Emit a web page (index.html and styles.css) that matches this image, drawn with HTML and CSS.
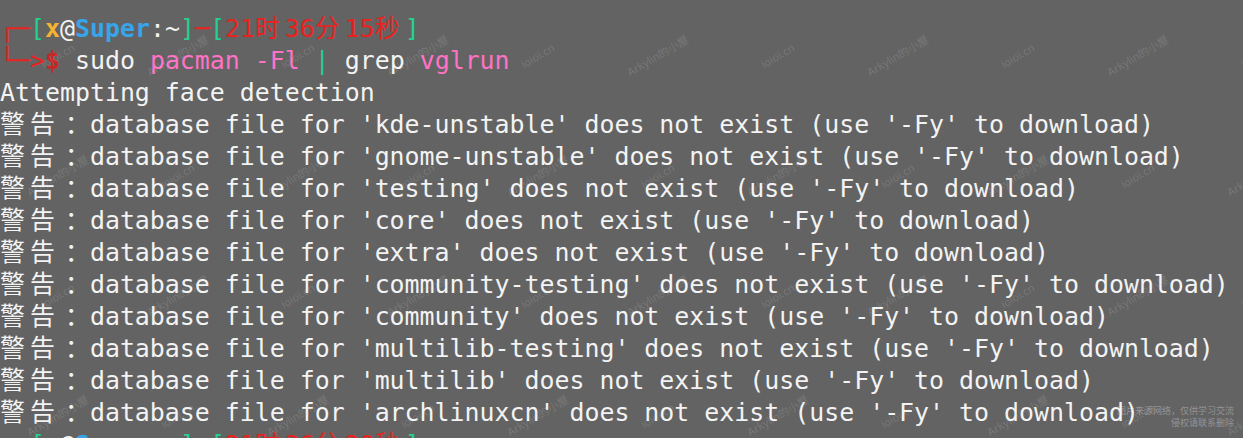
FILE: index.html
```html
<!DOCTYPE html>
<html lang="zh-CN">
<head>
<meta charset="utf-8">
<title>terminal</title>
<link rel="stylesheet" href="styles.css">
</head>
<body>
<div class="term">
<div class="line"><span class="r">┌─</span><span class="g">[</span><span class="y b">x</span><span>@</span><span class="bl b">Super</span><span>:~</span><span class="g">]</span><span class="r">─</span><span class="g">[</span><span class="r">21<span class="w">时</span>36<span class="w">分</span>15<span class="w">秒</span></span><span class="g">]</span></div>
<div class="line"><span class="r">└─&gt;</span><span class="dr b">$</span> sudo <span class="p">pacman -Fl</span> <span class="g">|</span> grep <span class="p">vglrun</span></div>
<div class="line">Attempting face detection</div>
<div class="line"><span class="w">警</span><span class="w">告</span><span class="w colon">：</span>database file for 'kde-unstable' does not exist (use '-Fy' to download)</div>
<div class="line"><span class="w">警</span><span class="w">告</span><span class="w colon">：</span>database file for 'gnome-unstable' does not exist (use '-Fy' to download)</div>
<div class="line"><span class="w">警</span><span class="w">告</span><span class="w colon">：</span>database file for 'testing' does not exist (use '-Fy' to download)</div>
<div class="line"><span class="w">警</span><span class="w">告</span><span class="w colon">：</span>database file for 'core' does not exist (use '-Fy' to download)</div>
<div class="line"><span class="w">警</span><span class="w">告</span><span class="w colon">：</span>database file for 'extra' does not exist (use '-Fy' to download)</div>
<div class="line"><span class="w">警</span><span class="w">告</span><span class="w colon">：</span>database file for 'community-testing' does not exist (use '-Fy' to download)</div>
<div class="line"><span class="w">警</span><span class="w">告</span><span class="w colon">：</span>database file for 'community' does not exist (use '-Fy' to download)</div>
<div class="line"><span class="w">警</span><span class="w">告</span><span class="w colon">：</span>database file for 'multilib-testing' does not exist (use '-Fy' to download)</div>
<div class="line"><span class="w">警</span><span class="w">告</span><span class="w colon">：</span>database file for 'multilib' does not exist (use '-Fy' to download)</div>
<div class="line"><span class="w">警</span><span class="w">告</span><span class="w colon">：</span>database file for 'archlinuxcn' does not exist (use '-Fy' to download)</div>
<div class="line"><span class="r">┌─</span><span class="g">[</span><span class="y b">x</span><span>@</span><span class="bl b">Super</span><span>:~</span><span class="g">]</span><span class="r">─</span><span class="g">[</span><span class="r">21<span class="w">时</span>36<span class="w">分</span>20<span class="w">秒</span></span><span class="g">]</span></div>
</div>

<div class="wm">
<span class="c"><i>ioioi.cn</i></span><span class="c"><i>Arkylin的小屋</i></span><span class="c"><i>ioioi.cn</i></span><span class="c"><i>Arkylin的小屋</i></span><span class="c"><i>ioioi.cn</i></span><span class="c"><i>Arkylin的小屋</i></span><span class="c"><i>ioioi.cn</i></span><span class="c"><i>Arkylin的小屋</i></span><span class="c"><i>ioioi.cn</i></span><span class="c"><i>Arkylin的小屋</i></span><span class="c"><i>ioioi.cn</i></span>
<span class="c"><i>Arkylin的小屋</i></span><span class="c"><i>ioioi.cn</i></span><span class="c"><i>Arkylin的小屋</i></span><span class="c"><i>ioioi.cn</i></span><span class="c"><i>Arkylin的小屋</i></span><span class="c"><i>ioioi.cn</i></span><span class="c"><i>Arkylin的小屋</i></span><span class="c"><i>ioioi.cn</i></span><span class="c"><i>Arkylin的小屋</i></span><span class="c"><i>ioioi.cn</i></span><span class="c"><i>Arkylin的小屋</i></span>
<span class="c"><i>ioioi.cn</i></span><span class="c"><i>Arkylin的小屋</i></span><span class="c"><i>ioioi.cn</i></span><span class="c"><i>Arkylin的小屋</i></span><span class="c"><i>ioioi.cn</i></span><span class="c"><i>Arkylin的小屋</i></span><span class="c"><i>ioioi.cn</i></span><span class="c"><i>Arkylin的小屋</i></span><span class="c"><i>ioioi.cn</i></span><span class="c"><i>Arkylin的小屋</i></span><span class="c"><i>ioioi.cn</i></span>
<span class="c"><i>Arkylin的小屋</i></span><span class="c"><i>ioioi.cn</i></span><span class="c"><i>Arkylin的小屋</i></span><span class="c"><i>ioioi.cn</i></span><span class="c"><i>Arkylin的小屋</i></span><span class="c"><i>ioioi.cn</i></span><span class="c"><i>Arkylin的小屋</i></span><span class="c"><i>ioioi.cn</i></span><span class="c"><i>Arkylin的小屋</i></span><span class="c"><i>ioioi.cn</i></span><span class="c"><i>Arkylin的小屋</i></span>
</div>

<div class="notice">图片来源网络，仅供学习交流<br>侵权请联系删除</div>
</body>
</html>
```

FILE: styles.css
```css
html, body {
  margin: 0;
  padding: 0;
}

body {
  position: relative;
  width: 1243px;
  height: 438px;
  overflow: hidden;
  background: #636363;
}

.term {
  padding-top: 13px;
  font-family: "DejaVu Sans Mono", "Noto Sans CJK SC", monospace;
  font-size: 24.9px;
  line-height: 32px;
  color: #f3f3f3;
}

.line {
  height: 32px;
  white-space: pre;
}

.w {
  display: inline-block;
  width: 2ch;
}

.colon {
  text-indent: 5px;
}

.b { font-weight: bold; }
.r { color: #e8231f; }
.dr { color: #c72626; }
.g { color: #26d08f; }
.y { color: #f5b22f; }
.bl { color: #38a4e9; }
.p { color: #ff72c6; }

.wm {
  position: absolute;
  left: -3px;
  top: -5px;
  display: grid;
  grid-template-columns: repeat(11, 120px);
  grid-auto-rows: 120px;
  pointer-events: none;
}

.c {
  display: flex;
  align-items: center;
  justify-content: center;
}

.c i {
  font-style: normal;
  font-family: "Noto Sans", "Noto Sans CJK SC", sans-serif;
  font-size: 11px;
  color: rgba(255, 255, 255, 0.15);
  transform: rotate(-30deg);
  white-space: nowrap;
}

.notice {
  position: absolute;
  right: 9px;
  bottom: 9px;
  font-family: "Noto Sans CJK SC", sans-serif;
  font-size: 9px;
  line-height: 12px;
  text-align: right;
  color: rgba(255, 255, 255, 0.32);
}
```
